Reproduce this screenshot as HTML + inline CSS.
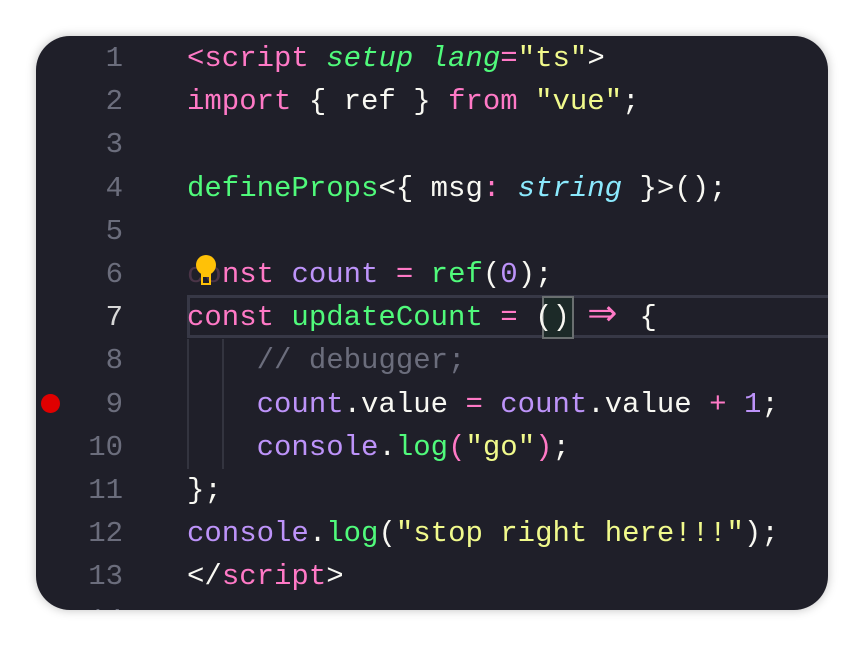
<!DOCTYPE html>
<html><head><style>
html,body{margin:0;padding:0;background:#fff;width:864px;height:646px;overflow:hidden}
.panel{position:absolute;left:36px;top:36px;width:792px;height:574px;background:#1f1f29;border-radius:34px;overflow:hidden;box-shadow:0 0 10px rgba(0,0,0,.25)}
.ln,.code{position:absolute;top:1px;font-family:"Liberation Mono",monospace;font-size:29px;line-height:43.2px;white-space:pre}
.ln{left:0;width:87px;text-align:right;color:#6b6d7c}
.code{left:151px;color:#f8f8f2}
.p{color:#ff79c6}.g{color:#50fa7b}.v{color:#bd93f9}.y{color:#f1fa8c}.c{color:#8be9fd;font-style:italic}.gi{color:#50fa7b;font-style:italic}.cm{color:#6b6d7c}
.cur{position:absolute;left:151px;top:259px;width:660px;height:37px;border:3px solid #373846;border-right:none}
.guide{position:absolute;top:303px;height:130px;width:2px;background:#33343f}
.arr{display:inline-block;width:34.8px;font-size:36px;line-height:20px;text-align:left;font-family:"DejaVu Sans",sans-serif}
</style></head><body>
<div class="panel">
<div class="cur"></div>
<div class="guide" style="left:151px"></div>
<div class="guide" style="left:186px"></div>
<div style="position:absolute;left:506px;top:260px;width:32px;height:43px;background:#1c2a28;border:2px solid #6a6f70;box-sizing:border-box"></div>
<div style="position:absolute;left:5px;top:358px;width:19px;height:19px;border-radius:50%;background:#e00000"></div>
<div class="ln">1
2
3
4
5
6
<span style="color:#d8d8d8">7</span>
8
9
10
11
12
13
14</div>
<div class="code"><span class="p">&lt;script</span> <span class="gi">setup</span> <span class="gi">lang</span><span class="p">=</span><span class="y">"ts"</span>&gt;
<span class="p">import</span> { ref } <span class="p">from</span> <span class="y">"vue"</span>;

<span class="g">defineProps</span>&lt;{ msg<span class="p">:</span> <span class="c">string</span> }&gt;();

<span style="color:#4a3447">co</span><span class="p">nst</span> <span class="v">count</span> <span class="p">=</span> <span class="g">ref</span>(<span class="v">0</span>);
<span class="p">const</span> <span class="g">updateCount</span> <span class="p">=</span> () <span class="p arr">⇒</span> {
    <span class="cm">// debugger;</span>
    <span class="v">count</span>.value <span class="p">=</span> <span class="v">count</span>.value <span class="p">+</span> <span class="v">1</span>;
    <span class="v">console</span>.<span class="g">log</span><span class="p">(</span><span class="y">"go"</span><span class="p">)</span>;
};
<span class="v">console</span>.<span class="g">log</span>(<span class="y">"stop right here!!!"</span>);
&lt;/<span class="p">script</span>&gt;</div>
<svg style="position:absolute;left:158px;top:218px" width="24" height="32" viewBox="0 0 24 32"><circle cx="12" cy="11" r="10" fill="#ffc107"/><rect x="7" y="14" width="10" height="8" fill="#ffc107"/><rect x="8" y="22" width="8" height="8" fill="none" stroke="#ffc107" stroke-width="2"/></svg>
</div>
</body></html>
